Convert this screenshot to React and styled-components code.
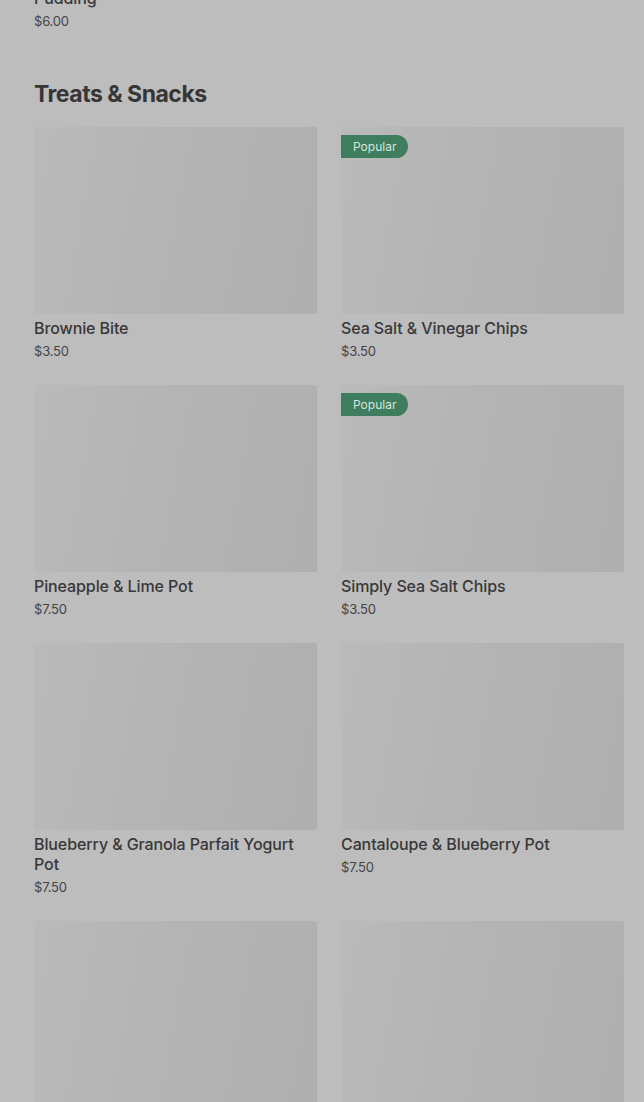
import React from "react";
import styled, { createGlobalStyle } from "styled-components";

const GlobalStyle = createGlobalStyle`
  html, body {
    margin: 0;
    padding: 0;
    background: #bdbdbd;
    font-family: Inter, "Noto Sans", Arial, sans-serif;
    color: #383838;
    overflow: hidden;
  }
`;

// last row only shows the top of its pictures in this view
const products = [
  { name: "Brownie Bite", price: "$3.50" },
  { name: "Sea Salt & Vinegar Chips", price: "$3.50", popular: true },
  { name: "Pineapple & Lime Pot", price: "$7.50" },
  { name: "Simply Sea Salt Chips", price: "$3.50", popular: true },
  { name: "Blueberry & Granola Parfait Yogurt Pot", price: "$7.50" },
  { name: "Cantaloupe & Blueberry Pot", price: "$7.50" },
  { id: "next-1" },
  { id: "next-2" },
];

const App = () => (
  <>
    <GlobalStyle />
    <Page>
      <PrevTail>
        <Name>Pudding</Name>
        <Price>$6.00</Price>
      </PrevTail>
      <Section>
        <Heading>Treats &amp; Snacks</Heading>
        <Grid>
          {products.map((p) => (
            <Card key={p.name || p.id}>
              <Thumb>
                {p.popular && <Badge>Popular</Badge>}
              </Thumb>
              {p.name && <Name>{p.name}</Name>}
              {p.price && <Price>{p.price}</Price>}
            </Card>
          ))}
        </Grid>
      </Section>
    </Page>
  </>
);

export default App;

const Page = styled.main`
  padding: 0 20px 0 34px;
  height: 1102px;
  overflow: hidden;
`;

const PrevTail = styled.div`
  margin-top: -12px;
  display: flex;
  flex-direction: column;
  gap: 4px;
`;

const Section = styled.section`
  margin-top: 50px;
`;

const Heading = styled.h2`
  margin: 0 0 19px;
  font-size: 23px;
  line-height: 28px;
  font-weight: 700;
  letter-spacing: -0.5px;
  color: #363636;
`;

const Grid = styled.div`
  display: grid;
  grid-template-columns: 1fr 1fr;
  column-gap: 24px;
  row-gap: 25px;
`;

const Card = styled.article`
  display: flex;
  flex-direction: column;
  gap: 4px;
`;

const Thumb = styled.div`
  position: relative;
  height: 187px;
  border-radius: 3px;
  background: linear-gradient(100deg, #bababa 0%, #b4b4b4 45%, #afafaf 100%);
`;

const Badge = styled.span`
  position: absolute;
  top: 8px;
  left: 0;
  height: 23px;
  padding: 0 12px;
  display: flex;
  align-items: center;
  font-size: 12px;
  color: #d6e6dd;
  background: #3e7d5d;
  border-radius: 0 12px 12px 0;
`;

const Name = styled.h3`
  margin: 0;
  font-size: 16px;
  line-height: 20px;
  font-weight: 500;
  letter-spacing: -0.1px;
  color: #383838;
`;

const Price = styled.span`
  font-size: 13px;
  line-height: 18px;
  color: #444;
  letter-spacing: -0.2px;
`;
